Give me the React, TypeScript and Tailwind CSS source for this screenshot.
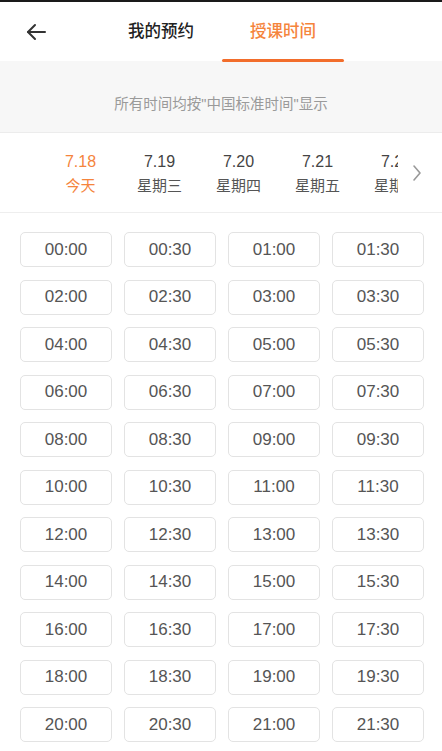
import React, { useState } from 'react';

const cjk = "font-['Liberation_Sans','Noto_Sans_CJK_SC',sans-serif]";

const dates = [
  { day: '7.18', week: '今天' },
  { day: '7.19', week: '星期三' },
  { day: '7.20', week: '星期四' },
  { day: '7.21', week: '星期五' },
  { day: '7.22', week: '星期六' },
];

// 00:00 .. 21:30 in half-hour steps
const slots: string[] = [];
for (let h = 0; h < 22; h++) {
  const hh = String(h).padStart(2, '0');
  slots.push(`${hh}:00`, `${hh}:30`);
}

export default function App() {
  const [activeDate, setActiveDate] = useState(0);

  return (
    <div className={`w-[442px] h-[751px] overflow-hidden bg-white border-t-2 border-[#1a1a1a] ${cjk}`}>
      {/* header */}
      <div className="relative h-[59px] flex items-center bg-white">
        <button className="absolute left-[24px] top-[18px] text-[#333]">
          <svg width="24" height="24" viewBox="0 0 24 24" fill="none" stroke="currentColor" strokeWidth="2" strokeLinecap="round" strokeLinejoin="round">
            <path d="M21 12H4" />
            <path d="M11 5l-7 7 7 7" />
          </svg>
        </button>
        <div className="flex h-full ml-[100px]">
          <div className="w-[122px] flex items-center justify-center text-[16.5px] font-medium text-[#222]">我的预约</div>
          <div className="relative w-[122px] flex items-center justify-center text-[16.5px] font-medium text-[#f5843c]">
            授课时间
            <span className="absolute bottom-[-1px] left-0 right-0 h-[3px] rounded-full bg-[#f26d2b]" />
          </div>
        </div>
      </div>

      {/* notice */}
      <div className="h-[72px] bg-[#f7f7f7] border-b border-[#ececec] flex items-center justify-center pt-[17px] text-[14.5px] text-[#9a9a9a]">
        所有时间均按"中国标准时间"显示
      </div>

      {/* dates */}
      <div className="h-[80px] flex items-center border-b border-[#eeeeee]">
        <div className="w-[398px] overflow-hidden flex pl-[41px]">
          {dates.map((d, i) => (
            <button
              key={d.day}
              onClick={() => setActiveDate(i)}
              className={`shrink-0 w-[79px] flex flex-col items-center leading-none ${i === activeDate ? 'text-[#f5843c]' : 'text-[#444]'}`}
            >
              <span className="text-[16px] mt-[1px]">{d.day}</span>
              <span className={`text-[15px] mt-[8px] ${i === activeDate ? '' : 'text-[#555]'}`}>{d.week}</span>
            </button>
          ))}
        </div>
        <svg className="ml-[14px] text-[#999]" width="10" height="18" viewBox="0 0 10 18" fill="none" stroke="currentColor" strokeWidth="1.6" strokeLinecap="round" strokeLinejoin="round">
          <path d="M2 2l6 7-6 7" />
        </svg>
      </div>

      {/* time slots */}
      <div className="grid grid-cols-4 gap-x-[12px] gap-y-[12.5px] pl-[20px] pr-[18px] pt-[19px]">
        {slots.map((t) => (
          <button
            key={t}
            className="h-[35px] rounded-[5px] border border-[#e3e3e3] bg-white text-[17px] text-[#555] flex items-center justify-center"
          >
            {t}
          </button>
        ))}
      </div>
    </div>
  );
}
